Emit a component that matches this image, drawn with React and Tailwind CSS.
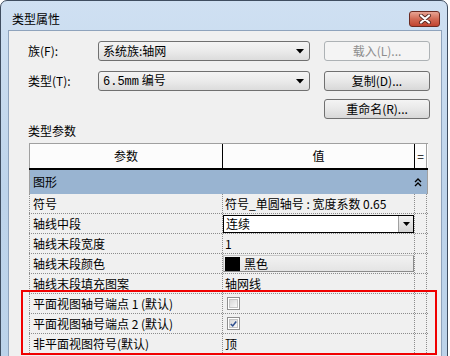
import React from "react";

const F = "font-['Noto_Sans_CJK_SC','Microsoft_YaHei',sans-serif]";

function Btn({ children, disabled }) {
  return (
    <div
      className={
        "w-[106px] h-[20px] rounded-[3px] border flex items-center justify-center text-[12px] leading-none " +
        (disabled
          ? "border-[#adb2b5] bg-[#f4f4f4] text-[#8d8d8d]"
          : "border-[#707070] bg-gradient-to-b from-[#f4f4f4] via-[#e8e8e8] to-[#d8d8d8] text-black")
      }
    >
      {children}
    </div>
  );
}

function Combo({ children }) {
  return (
    <div className="ml-[70px] w-[212px] h-[20px] rounded-[3px] border border-[#707070] bg-gradient-to-b from-[#f4f4f4] via-[#ebebeb] to-[#dcdcdc] flex items-center pl-[4px] pr-[5px] text-[12px] leading-none">
      <span className="flex-1">{children}</span>
      <svg width="8" height="5" viewBox="0 0 8 5">
        <path d="M0 0 H8 L4 4.5 Z" fill="#000" />
      </svg>
    </div>
  );
}

function Row({ label, children }) {
  return (
    <div className="flex h-[20px] border-b border-dotted border-[#8c8c8c] text-[12px] leading-none">
      <div className="w-[193px] border-l border-dotted border-[#8c8c8c] flex items-center pl-[3px] whitespace-nowrap">
        {label}
      </div>
      <div className="w-[192px] border-l border-dotted border-[#8c8c8c] flex items-center pl-[2px] whitespace-nowrap">
        {children}
      </div>
      <div className="w-[13px] border-l border-r border-dotted border-[#8c8c8c]"></div>
    </div>
  );
}

function Check({ checked }) {
  return (
    <div className="ml-[2px] w-[13px] h-[13px] border border-[#8f8f8f] bg-white p-[1px]">
      <div className="w-full h-full border border-[#c4c4c4] bg-gradient-to-br from-[#d8d8d8] to-[#f8f8f8] flex items-center justify-center">
        {checked && (
          <svg width="9" height="8" viewBox="0 0 9 8">
            <path d="M1 4 L3.5 6.5 L8 0.8" stroke="#2f4f8f" strokeWidth="2" fill="none" />
          </svg>
        )}
      </div>
    </div>
  );
}

export default function App() {
  return (
    <div className={"relative w-[450px] h-[356px] overflow-hidden bg-white text-black " + F}>
      <div className="w-[448px] h-[380px] rounded-t-[7px] border border-[#3f4d60] bg-gradient-to-b from-[#cfe0f2] via-[#bed4eb] to-[#bcd3ea] flex flex-col">
        {/* title bar */}
        <div className="h-[29px] pt-[6px] pl-[11px] pr-[7px] flex items-center justify-between">
          <span className="text-[12px] leading-none">类型属性</span>
          <div className="w-[31px] h-[16px] rounded-[3px] border border-[#6b2b22] bg-gradient-to-b from-[#e7a494] via-[#d16a55] to-[#c1432f] flex items-center justify-center">
            <svg width="14" height="10" viewBox="0 0 14 10">
              <path d="M3 1.5 L11 8.5 M11 1.5 L3 8.5" stroke="#5a2a24" strokeWidth="4" strokeLinecap="round" />
              <path d="M3 1.5 L11 8.5 M11 1.5 L3 8.5" stroke="#ffffff" strokeWidth="2.2" strokeLinecap="round" />
            </svg>
          </div>
        </div>
        {/* client */}
        <div className="ml-[7px] mr-[5px] flex-1 bg-[#f0f0f0] border border-[#8fa3bc] flex flex-col">
          <div className="mt-[10px] flex items-center h-[20px]">
            <span className="ml-[19px] w-[0px] whitespace-nowrap text-[12px] leading-none">族(F):</span>
            <Combo>系统族:轴网</Combo>
            <div className="ml-[14px]">
              <Btn disabled>载入(L)...</Btn>
            </div>
          </div>
          <div className="mt-[10px] flex items-center h-[20px]">
            <span className="ml-[19px] w-[0px] whitespace-nowrap text-[12px] leading-none">类型(T):</span>
            <Combo>
              <span className="font-['Liberation_Mono',monospace]">6.5mm</span> 编号
            </Combo>
            <div className="ml-[14px]">
              <Btn>复制(D)...</Btn>
            </div>
          </div>
          <div className="mt-[8px] flex h-[20px]">
            <div className="ml-[315px]">
              <Btn>重命名(R)...</Btn>
            </div>
          </div>
          <div className="h-[24px] flex items-center pl-[19px] text-[12px] leading-none">类型参数</div>
          {/* grid */}
          <div className="ml-[20px] w-[399px] flex flex-col">
            <div className="flex h-[27px] bg-[#fcfcfc] border-t border-[#a0a0a0] border-b-2 border-b-black text-[12px] leading-none">
              <div className="w-[193px] border-l border-[#a0a0a0] flex items-center justify-center">参数</div>
              <div className="w-[192px] border-l border-black flex items-center justify-center">值</div>
              <div className="w-[13px] border-l border-black border-r border-r-[#a0a0a0] flex items-center justify-center">=</div>
            </div>
            <div className="flex h-[24px] bg-[#99b4d1] border-l border-r border-[#a0a0a0] items-center text-[12px] leading-none">
              <span className="pl-[3px] flex-1">图形</span>
              <svg width="8" height="9" viewBox="0 0 8 9" className="mr-[5px]">
                <path d="M1 4 L4 1 L7 4 M1 8 L4 5 L7 8" stroke="#000" strokeWidth="1.4" fill="none" />
              </svg>
            </div>
            <Row label="符号">符号_单圆轴号 : 宽度系数 0.65</Row>
            <Row label="轴线中段">
              <div className="ml-[-2px] w-[191px] h-[18px] border border-black bg-white flex items-center">
                <span className="flex-1 pl-[2px]">连续</span>
                <div className="w-[15px] h-[16px] bg-gradient-to-b from-[#f2f2f2] to-[#d4d4d4] border-l border-[#a0a0a0] flex items-center justify-center">
                  <svg width="7" height="4" viewBox="0 0 7 4">
                    <path d="M0 0 H7 L3.5 4 Z" fill="#000" />
                  </svg>
                </div>
              </div>
            </Row>
            <Row label="轴线末段宽度">1</Row>
            <Row label="轴线末段颜色">
              <div className="ml-[-2px] w-[191px] h-[17px] bg-gradient-to-b from-[#f2f2f2] to-[#e4e4e4] border border-[#c8c8c8] border-r-[#8c8c8c] border-b-[#8c8c8c] flex items-center">
                <div className="ml-[1px] w-[15px] h-[14px] bg-black"></div>
                <span className="ml-[4px]">黑色</span>
              </div>
            </Row>
            <Row label="轴线末段填充图案">轴网线</Row>
            <Row label="平面视图轴号端点 1 (默认)">
              <Check />
            </Row>
            <Row label="平面视图轴号端点 2 (默认)">
              <Check checked />
            </Row>
            <Row label="非平面视图符号(默认)">顶</Row>
            <Row label=""></Row>
          </div>
        </div>
      </div>
      <div className="absolute left-[21px] top-[290px] w-[416px] h-[65px] border-2 border-[#f00000] pointer-events-none"></div>
    </div>
  );
}
